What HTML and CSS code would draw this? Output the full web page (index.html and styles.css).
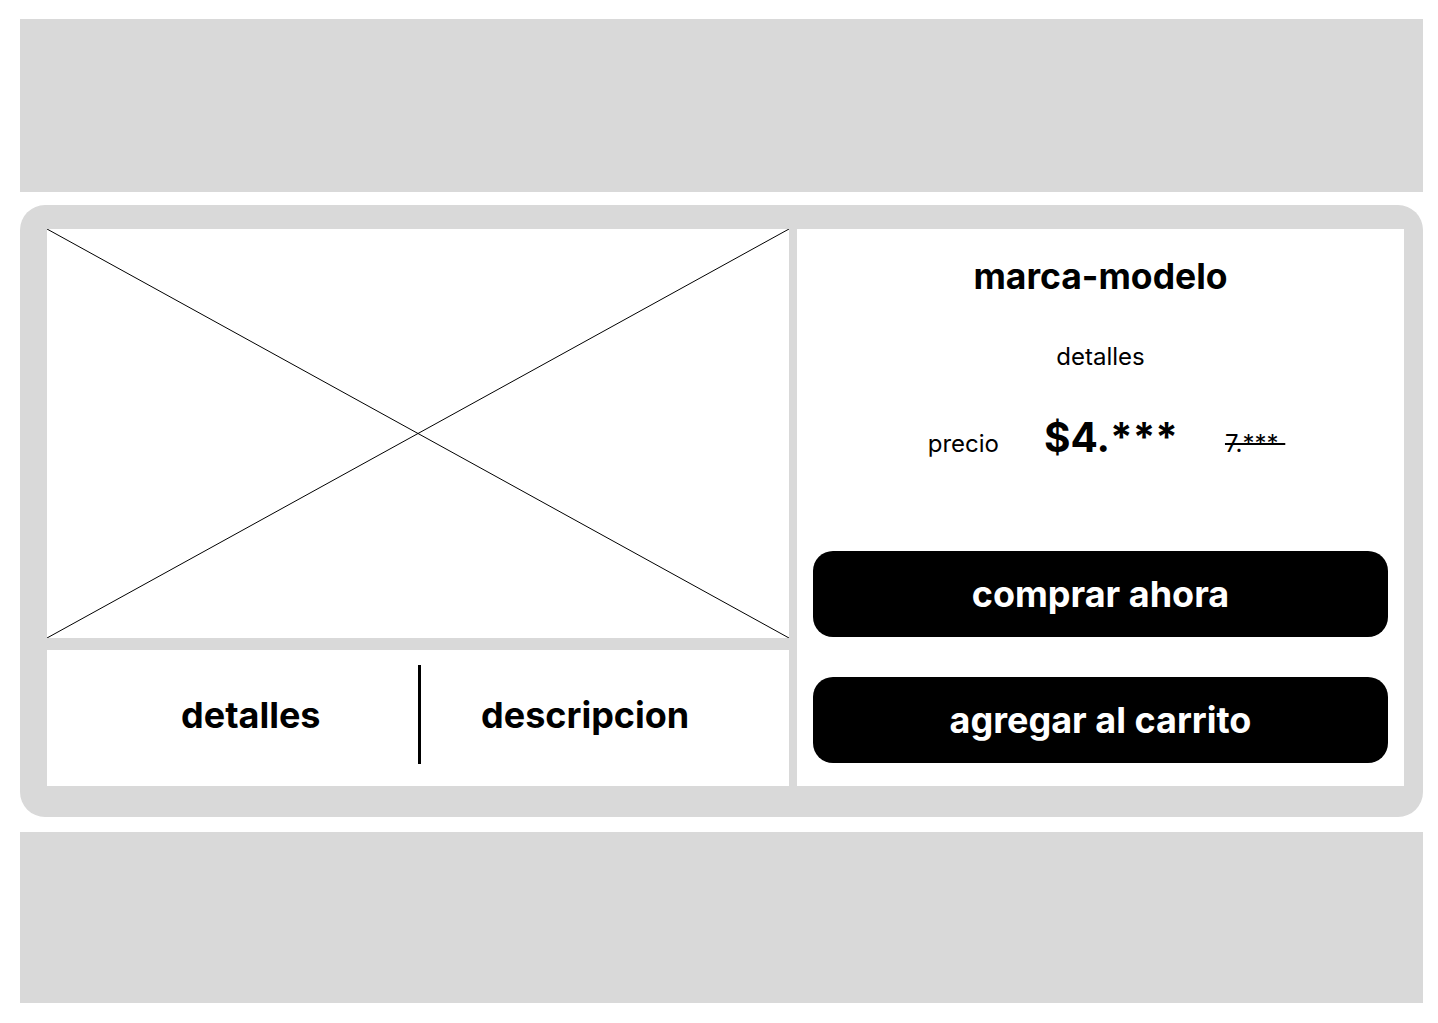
FILE: index.html
```html
<!DOCTYPE html>
<html lang="es">
<head>
<meta charset="utf-8">
<title>Producto</title>
<link rel="stylesheet" href="styles.css">
</head>
<body>
<div class="page">
  <header class="bar bar-top"></header>
  <main class="card">
    <section class="left">
      <div class="image">
        <svg class="x" viewBox="0 0 742 409" preserveAspectRatio="none">
          <line x1="0" y1="0" x2="742" y2="409" />
          <line x1="742" y1="0" x2="0" y2="409" />
        </svg>
      </div>
      <div class="tabs">
        <div class="tab tab-a">detalles</div>
        <div class="divider"></div>
        <div class="tab tab-b">descripcion</div>
      </div>
    </section>
    <section class="right">
      <h1 class="title">marca-modelo</h1>
      <p class="details">detalles</p>
      <div class="price-row">
        <span class="price-label">precio</span>
        <span class="price">$4.***</span>
        <span class="old-price">7.*** </span>
      </div>
      <div class="actions">
        <button class="btn">comprar ahora</button>
        <button class="btn">agregar al carrito</button>
      </div>
    </section>
  </main>
  <footer class="bar bar-bottom"></footer>
</div>
</body>
</html>
```

FILE: styles.css
```css
* { box-sizing: border-box; }
html, body { margin: 0; padding: 0; background: #fff; }
body { font-family: Inter, "Noto Sans", sans-serif; color: #000; }

.page {
  padding: 19px 15px 20px 20px;
  display: flex;
  flex-direction: column;
}
.bar { background: #d9d9d9; }
.bar-top { height: 173px; }
.bar-bottom { height: 171px; margin-top: 15px; }

.card {
  margin-top: 13px;
  background: #d9d9d9;
  border-radius: 25px;
  padding: 24px 19px 31px 27px;
  display: grid;
  grid-template-columns: 742px 607px;
  column-gap: 8px;
  height: 612px;
}

.left { display: flex; flex-direction: column; gap: 12px; }
.image { background: #fff; height: 409px; }
.x { display: block; width: 100%; height: 100%; }
.x line { stroke: #000; stroke-width: 1; }

.tabs {
  background: #fff;
  height: 136px;
  display: flex;
  align-items: center;
  padding-bottom: 7px;
}
.tab { font-size: 36px; font-weight: 700; }
.tab-a { width: 371px; padding-left: 134px; }
.tab-b { padding-left: 60px; }
.divider { width: 3px; height: 99px; background: #000; }

.right {
  background: #fff;
  display: flex;
  flex-direction: column;
  align-items: center;
  padding: 0 16px 23px;
}
.title {
  margin: 0;
  padding-top: 27px;
  font-size: 35.5px;
  font-weight: 700;
  line-height: 42px;
}
.details {
  margin: 44px 0 0;
  font-size: 24px;
  line-height: 30px;
}
.price-row {
  margin-top: 41px;
  display: flex;
  align-items: baseline;
  padding-left: 12px;
}
.price-label { font-size: 24px; }
.price { font-size: 40.5px; font-weight: 700; margin-left: 45px; }
.old-price {
  font-size: 24px;
  margin-left: 47px;
  text-decoration: line-through;
  white-space: pre;
}
.actions {
  margin-top: auto;
  width: 100%;
  display: flex;
  flex-direction: column;
  gap: 40px;
}
.btn {
  display: block;
  width: 100%;
  height: 86px;
  border: 0;
  border-radius: 20px;
  background: #000;
  color: #fff;
  font-family: inherit;
  font-size: 36px;
  font-weight: 700;
  padding: 0;
}
```
